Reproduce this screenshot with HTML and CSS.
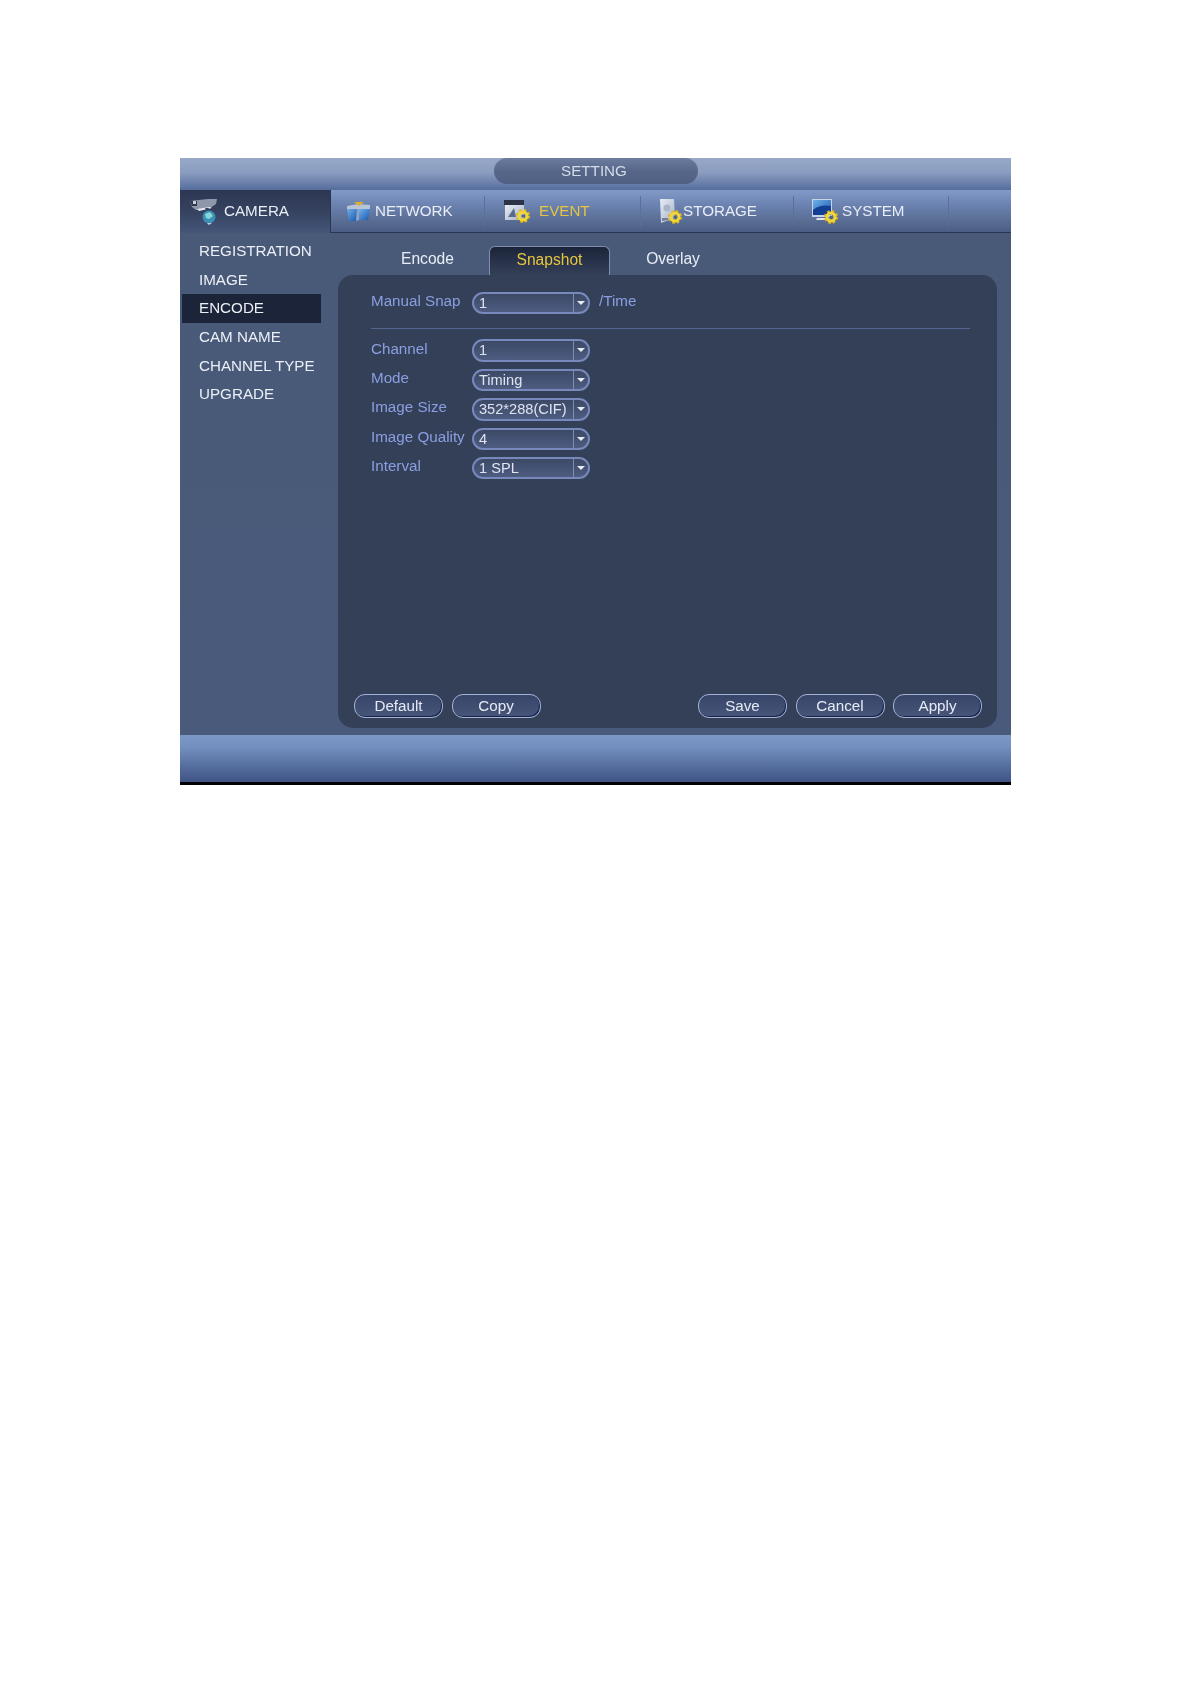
FILE: index.html
```html
<!DOCTYPE html>
<html lang="en">
<head>
    <meta charset="UTF-8">
    <meta name="viewport" content="width=device-width, initial-scale=1.0">
    <title>Setting</title>
    <link rel="stylesheet" href="styles.css">
</head>
<body>
    <svg class="defs" width="0" height="0">
        <defs>
            <symbol id="gear" viewBox="0 0 14 14">
                <circle cx="7" cy="7" r="5.6" fill="none" stroke="#d9b51c" stroke-width="2.8" stroke-dasharray="2.4 2"/>
                <circle cx="7" cy="7" r="4" fill="none" stroke="#f2d634" stroke-width="3"/>
                <circle cx="7" cy="7" r="1.5" fill="#4f5f82"/>
            </symbol>
            <linearGradient id="blue" x1="0" y1="0" x2="1" y2="1">
                <stop offset="0" stop-color="#6fb0ea"/>
                <stop offset="1" stop-color="#1a58b0"/>
            </linearGradient>
            <linearGradient id="paper" x1="0" y1="0" x2="1" y2="1">
                <stop offset="0" stop-color="#e8ecf4"/>
                <stop offset="1" stop-color="#a5b0c8"/>
            </linearGradient>
        </defs>
    </svg>

    <div class="screen">
        <div class="titlebar">
            <div class="title-pill">SETTING</div>
        </div>

        <div class="navbar">
            <div class="nav-item nav-camera">
                <svg class="nav-icon" width="29" height="27" viewBox="0 0 29 27">
                    <path d="M1 3 L19 1 L28 1 L27 6 L21 10 L7 12 L3 9 Z" fill="#8f98aa"/>
                    <path d="M1 3 L8 3 L8 8 L3 8 Z" fill="#2f384d"/>
                    <path d="M4 3 L7 3 L7 6 L4 6 Z" fill="#c9d0dc"/>
                    <path d="M8 11 L21 9 L23 10 L10 13 Z" fill="#e6e9f0"/>
                    <path d="M16 10 L20 10 L18 14 Z" fill="#39435a"/>
                    <circle cx="20" cy="19" r="6.5" fill="#3a8fb4"/>
                    <path d="M16 16 L21 14 L24 18 L20 21 L17 20 Z" fill="#86d8d8"/>
                    <path d="M18 25 L23 25 L20 27 Z" fill="#c8cedb"/>
                </svg>
                <span>CAMERA</span>
            </div>
            <div class="nav-item nav-network">
                <svg class="nav-icon" width="25" height="21" viewBox="0 0 25 21">
                    <path d="M1 5 L12 3 L24 4 L24 8 L1 9 Z" fill="#b9c3d6"/>
                    <path d="M8 1 L18 1 L13 5 Z" fill="#dfae2c"/>
                    <path d="M1 8 L11 8 L10 20 L3 20 Z" fill="url(#blue)"/>
                    <path d="M13 8 L24 8 L22 19 L13 19 Z" fill="url(#blue)"/>
                    <path d="M11 8 L13 8 L13 19 L10 20 Z" fill="#8fa2c4"/>
                </svg>
                <span>NETWORK</span>
            </div>
            <div class="nav-item nav-event">
                <svg class="nav-icon" width="27" height="24" viewBox="0 0 27 24">
                    <rect x="1" y="1" width="20" height="5" fill="#2c3346"/>
                    <rect x="2" y="6" width="19" height="15" fill="url(#paper)"/>
                    <path d="M5 18 L11 9 L13 18 Z" fill="#5a6a8c"/>
                    <use href="#gear" x="13" y="10" width="14" height="14"/>
                </svg>
                <span class="nav-active">EVENT</span>
            </div>
            <div class="nav-item nav-storage">
                <svg class="nav-icon" width="23" height="26" viewBox="0 0 23 26">
                    <path d="M1 1 L15 1 L16 20 L2 25 Z" fill="url(#paper)"/>
                    <circle cx="8" cy="10" r="3.5" fill="#aab4c8"/>
                    <path d="M3 20 L9 20 L9 22 L3 23 Z" fill="#6f7e9c"/>
                    <use href="#gear" x="9" y="12" width="14" height="14"/>
                </svg>
                <span>STORAGE</span>
            </div>
            <div class="nav-item nav-system">
                <svg class="nav-icon" width="27" height="26" viewBox="0 0 27 26">
                    <rect x="1" y="1" width="20" height="18" fill="#c9d3e6"/>
                    <rect x="2" y="2" width="18" height="15" fill="url(#blue)"/>
                    <path d="M2 12 C8 7 14 7 20 8 L20 17 L2 17 Z" fill="#123f94"/>
                    <path d="M6 20 L18 20 L19 22 L5 22 Z" fill="#dfe4ee"/>
                    <use href="#gear" x="13" y="12" width="14" height="14"/>
                </svg>
                <span>SYSTEM</span>
            </div>
            <div class="nav-item nav-rest"></div>
        </div>

        <div class="main">
            <ul class="sidebar">
                <li>REGISTRATION</li>
                <li>IMAGE</li>
                <li class="selected">ENCODE</li>
                <li>CAM NAME</li>
                <li>CHANNEL TYPE</li>
                <li>UPGRADE</li>
            </ul>

            <div class="content">
                <div class="tabs">
                    <div class="tab">Encode</div>
                    <div class="tab tab-active">Snapshot</div>
                    <div class="tab tab-last">Overlay</div>
                </div>

                <div class="panel">
                    <div class="form">
                        <div class="row">
                            <label>Manual Snap</label>
                            <div class="select"><span>1</span><i></i></div>
                            <span class="unit">/Time</span>
                        </div>
                        <div class="divider"></div>
                        <div class="rows">
                            <div class="row">
                                <label>Channel</label>
                                <div class="select"><span>1</span><i></i></div>
                            </div>
                            <div class="row">
                                <label>Mode</label>
                                <div class="select"><span>Timing</span><i></i></div>
                            </div>
                            <div class="row">
                                <label>Image Size</label>
                                <div class="select"><span>352*288(CIF)</span><i></i></div>
                            </div>
                            <div class="row">
                                <label>Image Quality</label>
                                <div class="select"><span>4</span><i></i></div>
                            </div>
                            <div class="row">
                                <label>Interval</label>
                                <div class="select"><span>1 SPL</span><i></i></div>
                            </div>
                        </div>
                    </div>

                    <div class="buttons">
                        <div class="btn-group">
                            <button>Default</button>
                            <button>Copy</button>
                        </div>
                        <div class="btn-group">
                            <button>Save</button>
                            <button>Cancel</button>
                            <button>Apply</button>
                        </div>
                    </div>
                </div>
            </div>
        </div>

        <div class="footer"></div>
    </div>
</body>
</html>
```

FILE: styles.css
```css
html {
    background: #fff;
}

body {
    margin: 0;
    padding: 158px 0 0 180px;
    box-sizing: border-box;
    min-height: 1684px;
    background: #fff;
    font-family: "Liberation Sans", Arial, sans-serif;
    font-size: 15.2px;
    color: #e6eaf4;
}

.defs {
    display: block;
    height: 0;
}

/* the original is a soft photo of a monitor, so everything is blurred a little */
.screen {
    width: 831px;
    height: 627px;
    display: flex;
    flex-direction: column;
    background: #4a5a7a;
    filter: blur(0.4px);
}

/* title */
.titlebar {
    height: 32px;
    flex: none;
    display: flex;
    justify-content: center;
    background: linear-gradient(#98a9c7 0%, #8a9dc0 45%, #6d83ad 75%, #566c9c 100%);
}

.title-pill {
    width: 204px;
    height: 26px;
    line-height: 25px;
    text-align: center;
    text-indent: -3px;
    color: #d5dbe8;
    border-radius: 13px;
    background: linear-gradient(#6b7c9f, #566789 50%, #4f6084);
}

/* top menu */
.navbar {
    height: 43px;
    flex: none;
    display: flex;
    background: linear-gradient(#819ac8 0%, #6c83b1 35%, #56698f 80%, #4b5d82 100%);
    border-bottom: 1px solid #2a3650;
    box-sizing: border-box;
}

.nav-item {
    flex: none;
    display: flex;
    align-items: center;
    box-sizing: border-box;
    height: 30px;
    margin-top: 6px;
    border-right: 1px solid #5d6f97;
    color: #e9edf6;
}

.nav-item span {
    padding-bottom: 2px;
}

.nav-camera {
    width: 151px;
    height: 43px;
    margin-top: 0;
    padding-left: 9px;
    gap: 6px;
    border-right: 1px solid #2a3650;
    background: linear-gradient(#2c3753, #35425f 50%, #45567a);
}

.nav-network {
    width: 154px;
    padding-left: 15px;
    gap: 4px;
}

.nav-event {
    width: 156px;
    padding-left: 18px;
    gap: 9px;
}

.nav-storage {
    width: 153px;
    padding-left: 18px;
    gap: 1px;
}

.nav-system {
    width: 155px;
    padding-left: 17px;
    gap: 4px;
}

.nav-rest {
    flex: 1;
    border-right: 0;
}

.nav-active {
    color: #e6c53f;
}

/* body of the window */
.main {
    height: 502px;
    flex: none;
    display: flex;
    background: linear-gradient(#495a79, #4a5a7a);
}

.sidebar {
    list-style: none;
    margin: 0;
    padding: 4px 0 0;
    width: 158px;
    flex: none;
}

.sidebar li {
    height: 28.7px;
    line-height: 27px;
    width: 139px;
    margin-left: 2px;
    padding-left: 17px;
    box-sizing: border-box;
    white-space: nowrap;
    color: #eceff6;
}

.sidebar .selected {
    background: #1b2438;
}

.content {
    width: 659px;
    flex: none;
    display: flex;
    flex-direction: column;
}

.tabs {
    height: 42px;
    flex: none;
    display: flex;
    align-items: flex-end;
    gap: 1px;
    padding-left: 29px;
}

.tab {
    width: 121px;
    height: 29px;
    line-height: 26px;
    font-size: 15.6px;
    text-align: center;
    box-sizing: border-box;
    color: #e9edf6;
}

.tab-active {
    color: #e6c53f;
    border: 1px solid #7f8eb0;
    border-bottom: 0;
    border-radius: 6px 6px 0 0;
    background: linear-gradient(#1b2439, #343f58);
}

.tab-last {
    padding-left: 3px;
}

.panel {
    height: 453px;
    flex: none;
    box-sizing: border-box;
    padding: 17px 15px 10px 16px;
    display: flex;
    flex-direction: column;
    justify-content: space-between;
    border-radius: 15px;
    background: #343f58;
}

.form {
    padding-left: 17px;
    padding-right: 12px;
}

.row {
    display: flex;
    align-items: center;
    height: 22.4px;
}

.row label {
    width: 101px;
    flex: none;
    padding-bottom: 5px;
    white-space: nowrap;
    color: #8a9fe2;
}

.unit {
    margin-left: 9px;
    padding-bottom: 5px;
    color: #8a9fe2;
}

.divider {
    height: 1px;
    margin: 14px 0 10px;
    background: #52648f;
}

.rows {
    display: flex;
    flex-direction: column;
    gap: 7px;
}

.select {
    width: 118px;
    height: 22.4px;
    flex: none;
    display: flex;
    box-sizing: border-box;
    border: 2px solid #7788ba;
    border-radius: 11px;
    background: linear-gradient(#3c4966, #4d5c80);
    overflow: hidden;
}

.select span {
    flex: 1;
    padding-left: 5px;
    line-height: 18px;
    font-size: 14.6px;
    color: #dfe4f0;
    white-space: nowrap;
}

.select i {
    width: 14px;
    flex: none;
    position: relative;
    border-left: 1px solid #7c8cb8;
}

.select i::after {
    content: "";
    position: absolute;
    left: 3px;
    top: 7px;
    border-left: 4px solid transparent;
    border-right: 4px solid transparent;
    border-top: 4px solid #e8ecf5;
}

.buttons {
    display: flex;
    justify-content: space-between;
}

.btn-group {
    display: flex;
    gap: 8.5px;
}

button {
    width: 89px;
    height: 24px;
    padding: 0 0 1px;
    font: inherit;
    color: #e6eaf4;
    border: 1px solid #a4b2d4;
    border-radius: 11px;
    background: linear-gradient(#38456a, #465578);
    box-shadow: inset -1px -1px 0 #16244e;
}

.footer {
    height: 50px;
    flex: none;
    box-sizing: border-box;
    border-bottom: 3px solid #000;
    background: linear-gradient(#7b97c6 0%, #7490c0 25%, #566f9f 65%, #3f5485 100%);
}
```
